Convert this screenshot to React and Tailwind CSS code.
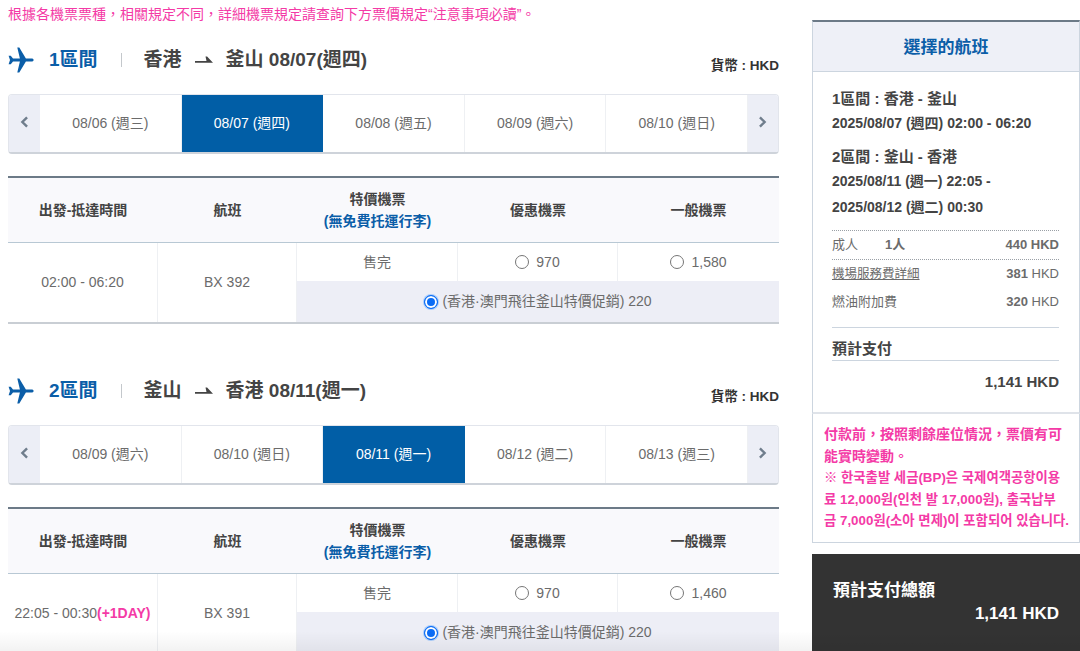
const legs = [
  {
    leg: "1區間",
    from: "香港",
    to: "釜山 08/07(週四)",
    dates: ["08/06 (週三)", "08/07 (週四)", "08/08 (週五)", "08/09 (週六)", "08/10 (週日)"],
    active: 1,
    time: "02:00 - 06:20",
    flight: "BX 392",
    regular: "1,580",
  },
  {
    leg: "2區間",
    from: "釜山",
    to: "香港 08/11(週一)",
    dates: ["08/09 (週六)", "08/10 (週日)", "08/11 (週一)", "08/12 (週二)", "08/13 (週三)"],
    active: 2,
    time: "22:05 - 00:30",
    nextDay: true,
    flight: "BX 391",
    regular: "1,460",
  },
];

function PlaneIcon() {
  return (
    <svg viewBox="0 0 26 26" className="w-[26px] h-[26px] shrink-0" fill="#0b5ea8">
      <path d="M9.3 0.5h2l6.6 11h5.6c1.2 0 2.2 0.6 2.2 1.5s-1 1.5-2.2 1.500h-5.600l-6.600 11h-2l2.600-11H5l-2.200 2.700H0.600L2 13 0.600 8.800h2.200L5 11.500h6.900z" />
    </svg>
  );
}

function HarpoonIcon() {
  return (
    <svg viewBox="0 0 18 8" className="w-[18px] h-[8px] shrink-0" fill="#444">
      <path d="M0 5h11.500L10.500 0.500h1.600L18 6.800H0z" />
    </svg>
  );
}

function Chevron({ right }) {
  return (
    <svg viewBox="0 0 10 14" className="w-[9px] h-[12px]" fill="none" stroke="#6f7d8c" strokeWidth="2.800">
      <path d={right ? "M2 1.500 7.500 7 2 12.500" : "M8 1.500 2.500 7 8 12.500"} />
    </svg>
  );
}

function Radio({ checked }) {
  return (
    <input
      type="radio"
      readOnly
      checked={!!checked}
      className="appearance-none w-[14px] h-[14px] shrink-0 rounded-full border border-[#767676] bg-white checked:border-[#0b6cf5] checked:bg-[#0b6cf5] checked:shadow-[inset_0_0_0_2px_#fff,0_0_0_1px_#a9cdfb]"
    />
  );
}

function DateBar({ dates, active }) {
  return (
    <div className="mt-[21px] h-[60px] flex rounded-[4px] border border-[#e2e5ec] border-b-[2px] border-b-[#ced3da] overflow-hidden text-[14px] text-[#6b6b6b]">
      <div className="w-[31px] shrink-0 bg-[#eceef6] flex items-center justify-center pb-[3px]">
        <Chevron />
      </div>
      {dates.map((d, i) => (
        <div
          key={d}
          className={
            "flex-1 flex items-center justify-center border-r border-[#eef0f3] last:border-r-0 " +
            (i === active ? "bg-[#015ea6] text-white border-r-[#015ea6]" : "bg-white")
          }
        >
          {d}
        </div>
      ))}
      <div className="w-[30px] shrink-0 bg-[#eceef6] flex items-center justify-center pb-[3px]">
        <Chevron right />
      </div>
    </div>
  );
}

function FareTable({ time, nextDay, flight, regular }) {
  return (
    <div className="mt-[22px] border-t-[2px] border-[#6c7a87] text-[14px] text-[#6b6b6b]">
      <div className="h-[65px] grid grid-cols-[150px_139px_161px_160px_161px] items-center text-center font-bold text-[#444] bg-[#f9f9fc] border-b border-[#b8c8d4]">
        <div>出發-抵達時間</div>
        <div>航班</div>
        <div className="leading-[22px]">
          特價機票
          <div className="text-[#0b5ea8]">(無免費托運行李)</div>
        </div>
        <div>優惠機票</div>
        <div>一般機票</div>
      </div>
      <div className="h-[81px] grid grid-cols-[150px_139px_161px_160px_161px] grid-rows-[38px_1fr] text-center border-b-[2px] border-[#c9ced4]">
        <div className="row-span-2 flex items-center justify-center border-r border-[#eef0f3] whitespace-nowrap">
          {time}
          {nextDay && <span className="font-bold text-[#f43aa6]">(+1DAY)</span>}
        </div>
        <div className="row-span-2 flex items-center justify-center border-r border-[#eef0f3]">{flight}</div>
        <div className="flex items-center justify-center border-r border-[#eef0f3]">售完</div>
        <div className="flex items-center justify-center gap-[7px] border-r border-[#eef0f3]">
          <Radio />970
        </div>
        <div className="flex items-center justify-center gap-[7px]">
          <Radio />{regular}
        </div>
        <div className="col-span-3 bg-[#edeef6] flex items-center justify-center gap-[4px]">
          <Radio checked />
          <span>(香港·澳門飛往釜山特價促銷) 220</span>
        </div>
      </div>
    </div>
  );
}

function LegSection({ data, className }) {
  return (
    <section className={className}>
      <div className="h-[26px] flex items-center">
        <PlaneIcon />
        <span className="ml-[15px] text-[19px] font-bold text-[#0b5ea8]">{data.leg}</span>
        <span className="ml-[23px] w-px h-[14px] bg-[#c4c8cc]" />
        <span className="ml-[22px] text-[19px] font-bold text-[#444]">{data.from}</span>
        <span className="mx-[13px]"><HarpoonIcon /></span>
        <span className="text-[19px] font-bold text-[#444]">{data.to}</span>
        <span className="ml-auto mt-[12px] text-[13.5px] font-bold text-[#333]">貨幣 : HKD</span>
      </div>
      <DateBar dates={data.dates} active={data.active} />
      <FareTable {...data} />
    </section>
  );
}

function Sidebar() {
  return (
    <aside className="w-[268px] shrink-0 ml-[33px] pt-[20px] text-[#444]">
      <div className="border border-[#ccd5df] border-t-[2px] border-t-[#6c7a87] border-b-[2px] border-b-[#dfe3e9]">
        <div className="h-[50px] flex items-center justify-center pt-[2px] bg-[#eef0f7] border-b border-[#ccd5df] text-[17px] font-bold text-[#0b5ea8]">
          選擇的航班
        </div>
        <div className="pl-[19px] pr-[20px] pt-[14px] h-[340px]">
          <div className="text-[15px] font-bold leading-[26px]">1區間 : 香港 - 釜山</div>
          <div className="text-[14px] font-bold leading-[26px] whitespace-nowrap mt-[-2px]">2025/08/07 (週四) 02:00 - 06:20</div>
          <div className="text-[15px] font-bold leading-[26px] mt-[8px]">2區間 : 釜山 - 香港</div>
          <div className="text-[14px] font-bold leading-[26px] whitespace-nowrap mt-[-2px]">
            2025/08/11 (週一) 22:05 -<br />2025/08/12 (週二) 00:30
          </div>
          <div className="mt-[10px] h-[30px] flex items-center border-y border-dotted border-[#9aa0a6] text-[13px] text-[#6b6b6b]">
            <span className="w-[53px]">成人</span>
            <span className="font-bold">1人</span>
            <span className="ml-auto font-bold">440 HKD</span>
          </div>
          <div className="h-[28px] flex items-center text-[13px] text-[#6b6b6b]">
            <span className="underline text-[12.5px]">機場服務費詳細</span>
            <span className="ml-auto"><b>381</b> HKD</span>
          </div>
          <div className="h-[28px] flex items-center text-[13px] text-[#6b6b6b]">
            <span>燃油附加費</span>
            <span className="ml-auto"><b>320</b> HKD</span>
          </div>
          <div className="mt-[11px] h-[34px] flex items-end border-y border-[#ccd5df] text-[15px] font-bold">預計支付</div>
          <div className="mt-[10px] text-right text-[15px] font-bold">1,141 HKD</div>
        </div>
      </div>
      <div className="h-[129px] border border-t-0 border-[#ccd5df] pl-[11px] pt-[10px] whitespace-nowrap text-[14px] font-bold leading-[21.5px] text-[#f43aa6]">
        付款前，按照剩餘座位情況，票價有可
        <br />
        能實時變動。
        <br />
        <span className="text-[13.35px]">
          ※ 한국출발 세금(BP)은 국제여객공항이용
          <br />
          료 12,000원(인천 발 17,000원), 출국납부
          <br />
          금 7,000원(소아 면제)이 포함되어 있습니다.
        </span>
      </div>
      <div className="mt-[11px] h-[97px] bg-[#333] text-white font-bold px-[21px] pt-[27px]">
        <div className="text-[17px] leading-[20px]">預計支付總額</div>
        <div className="mt-[3px] text-right text-[17px] leading-[20px]">1,141 HKD</div>
      </div>
    </aside>
  );
}

export default function App() {
  return (
    <div className="relative h-[651px] w-[1080px] overflow-hidden bg-white flex font-['Liberation_Sans','Noto_Sans_CJK_TC','Noto_Sans_CJK_KR',sans-serif]">
      <main className="w-[771px] ml-[8px] shrink-0">
        <p className="pt-[4px] text-[14px] leading-[20px] text-[#f43aa6]">
          根據各機票票種，相關規定不同，詳細機票規定請查詢下方票價規定“注意事項必讀”。
        </p>
        <LegSection data={legs[0]} className="mt-[23px]" />
        <LegSection data={legs[1]} className="mt-[54px]" />
      </main>
      <Sidebar />
      <div className="absolute inset-x-0 bottom-0 h-[20px] bg-gradient-to-t from-black/5 to-transparent pointer-events-none" />
    </div>
  );
}
